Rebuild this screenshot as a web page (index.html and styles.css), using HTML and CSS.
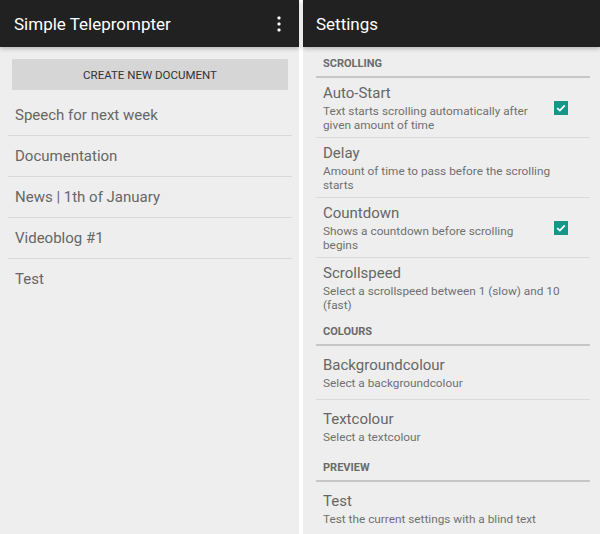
FILE: index.html
```html
<!DOCTYPE html>
<html lang="en">
  <head>
    <meta charset="UTF-8" />
    <meta name="viewport" content="width=device-width, initial-scale=1.0" />
    <title>Simple Teleprompter</title>
    <link rel="stylesheet" href="styles.css">
  </head>
  <body>
    <div class="screen screen-left">
      <header class="bar">
        <span class="bar-title">Simple Teleprompter</span>
        <svg class="overflow" width="4" height="16" viewBox="0 0 4 16">
          <rect x="0.5" y="0.5" width="3" height="3" rx="1" fill="#fff" />
          <rect x="0.5" y="6.5" width="3" height="3" rx="1" fill="#fff" />
          <rect x="0.5" y="12.5" width="3" height="3" rx="1" fill="#fff" />
        </svg>
      </header>
      <button class="create-btn">CREATE NEW DOCUMENT</button>
      <ul class="doc-list">
        <li>Speech for next week</li>
        <li>Documentation</li>
        <li>News | 1th of January</li>
        <li>Videoblog #1</li>
        <li>Test</li>
      </ul>
    </div>

    <div class="screen screen-right">
      <header class="bar">
        <span class="bar-title">Settings</span>
      </header>
      <div class="prefs">
        <div class="pref-cat">SCROLLING</div>
        <div class="pref">
          <div class="pref-text">
            <div class="pref-title">Auto-Start</div>
            <div class="pref-sum">Text starts scrolling automatically after given amount of time</div>
          </div>
          <span class="check">
            <svg width="14" height="14" viewBox="0 0 14 14">
              <path d="M3.2 7.2 L5.8 9.6 L10.8 4.4" fill="none" stroke="#fff" stroke-width="1.8" />
            </svg>
          </span>
        </div>
        <div class="pref">
          <div class="pref-text">
            <div class="pref-title">Delay</div>
            <div class="pref-sum">Amount of time to pass before the scrolling starts</div>
          </div>
        </div>
        <div class="pref">
          <div class="pref-text">
            <div class="pref-title">Countdown</div>
            <div class="pref-sum">Shows a countdown before scrolling begins</div>
          </div>
          <span class="check">
            <svg width="14" height="14" viewBox="0 0 14 14">
              <path d="M3.2 7.2 L5.8 9.6 L10.8 4.4" fill="none" stroke="#fff" stroke-width="1.8" />
            </svg>
          </span>
        </div>
        <div class="pref last">
          <div class="pref-text">
            <div class="pref-title">Scrollspeed</div>
            <div class="pref-sum">Select a scrollspeed between 1 (slow) and 10 (fast)</div>
          </div>
        </div>

        <div class="pref-cat">COLOURS</div>
        <div class="pref single">
          <div class="pref-text">
            <div class="pref-title">Backgroundcolour</div>
            <div class="pref-sum">Select a backgroundcolour</div>
          </div>
        </div>
        <div class="pref single last">
          <div class="pref-text">
            <div class="pref-title">Textcolour</div>
            <div class="pref-sum">Select a textcolour</div>
          </div>
        </div>

        <div class="pref-cat">PREVIEW</div>
        <div class="pref single last">
          <div class="pref-text">
            <div class="pref-title">Test</div>
            <div class="pref-sum">Test the current settings with a blind text</div>
          </div>
        </div>
      </div>
    </div>
  </body>
</html>
```

FILE: styles.css
```css
body {
  margin: 0;
  display: flex;
  gap: 4px;
  background: #fff;
  font-family: Roboto, "Liberation Sans", sans-serif;
  height: 534px;
  overflow: hidden;
}
.screen {
  background: #eeeeee;
  height: 534px;
  display: flex;
  flex-direction: column;
}
.screen-left {
  width: 299px;
}
.screen-right {
  width: 297px;
}
.bar {
  height: 47px;
  flex: none;
  background: #212121;
  color: #fff;
  display: flex;
  align-items: center;
  box-shadow: 0 2px 4px rgba(0, 0, 0, 0.22);
  position: relative;
  z-index: 1;
}
.bar-title {
  font-size: 17px;
  flex: 1;
}
.screen-left .bar {
  padding-left: 14px;
}
.screen-right .bar {
  padding-left: 13px;
}
.overflow {
  margin-right: 18px;
  margin-top: 1px;
}
.create-btn {
  margin: 12px 11px 0 12px;
  height: 31px;
  border: none;
  border-radius: 1px;
  background: #d6d6d6;
  color: #333;
  font-family: inherit;
  font-size: 11.5px;
  padding: 0;
}
.doc-list {
  list-style: none;
  margin: 5px 7px 0 8px;
  padding: 0;
}
.doc-list li {
  height: 40px;
  line-height: 40px;
  border-bottom: 1px solid #d9d9d9;
  padding-left: 7px;
  font-size: 15px;
  color: #666;
}
.doc-list li:last-child {
  border-bottom: none;
}
.prefs {
  margin: 0 10px 0 13px;
  padding-top: 2px;
}
.pref-cat {
  padding: 8px 0 5px 7px;
  line-height: 14px;
  font-size: 11px;
  font-weight: bold;
  color: #6a6a6a;
  border-bottom: 2px solid #c6c6c6;
}
.pref {
  display: flex;
  align-items: center;
  padding: 6px 14px 5px 7px;
  border-bottom: 1px solid #dadada;
}
.pref.single {
  padding: 10px 14px 9px 7px;
}
.pref.last {
  border-bottom: none;
}
.pref-text {
  flex: 1;
}
.pref-title {
  font-size: 15px;
  line-height: 18px;
  color: #666;
}
.pref-sum {
  margin-top: 2px;
  font-size: 11.8px;
  line-height: 14px;
  color: #707070;
}
.check {
  flex: none;
  width: 14px;
  height: 14px;
  margin: 0 8px 0 14px;
  background: #159688;
  display: flex;
}
```
